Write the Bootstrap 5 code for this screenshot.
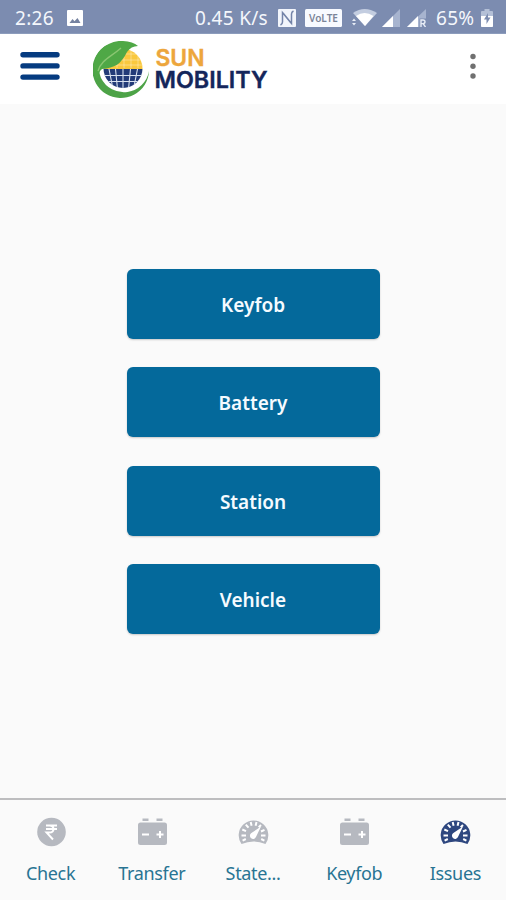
<!DOCTYPE html>
<html lang="en">
<head>
<meta charset="utf-8">
<meta name="viewport" content="width=device-width, initial-scale=1">
<title>Sun Mobility</title>
<link href="https://cdn.jsdelivr.net/npm/bootstrap@5.3.0/dist/css/bootstrap.min.css" rel="stylesheet">
<style>
body{font-family:"Noto Sans",sans-serif;background:#fafafa;height:900px;overflow:hidden}
svg{display:block;flex:none}
.statusbar{height:34px;background:#7c8cb0;color:#f4f7fc;font-size:19px;line-height:34px;border-bottom:1px solid #8c9cbc;padding:2px 13px 0 15px}
.clock{width:52px;letter-spacing:.3px}
.speed{width:83px;letter-spacing:.3px}
.percent{width:45px;margin-left:10px;letter-spacing:.3px}
.nfc{margin-right:9px}
.volte{margin-right:10px}
.wifi{margin-right:5px}
.sig{margin-right:7px}
.topbar{height:70px;background:#fff;padding:0 19px 0 20px}
.icon-btn{background:none;border:0;padding:0}
.brand-logo{margin-left:33px}
.actions{width:253px;gap:28.5px;padding-top:1px}
.action-btn{height:70px;border:0;border-radius:6px;background:#04699b;color:#f5fbff;font-size:19px;font-weight:600;padding-top:8px;box-shadow:0 1px 2px #0003}
.action-btn:hover{background:#04699b;color:#fff}
.tabs{height:102px;border-top:2px solid #bdbdbf;background:#fafafa}
.tab-link{color:#287493;font-size:18px;line-height:26px;text-decoration:none;padding-top:16px;letter-spacing:-.35px}
.tab-link svg{margin-bottom:12px;color:#b6b9c0}
.tab-link.active svg{color:#2e477f}
</style>
</head>
<body class="d-flex flex-column">
<svg width="0" height="0" class="position-absolute" aria-hidden="true">
  <symbol id="battery" viewBox="0 0 32 32">
    <path fill="currentColor" d="M6.500 2.500h6V5h-6zM20.500 2.500h6V5h-6zM4.500 6.500h24q2.500 0 2.500 2.500v17.500q0 2.500-2.500 2.500h-24Q2 29 2 26.500V9q0-2.500 2.500-2.500z"/>
    <path stroke="#fff" stroke-width="2" d="M6 18.500h7M20.500 18.500h7M24 15v7"/>
  </symbol>
  <symbol id="gauge" viewBox="0 0 32 32">
    <path fill="currentColor" d="M4.500 28A14.800 14.800 0 1 1 28.500 28Q16.500 23 4.500 28z"/>
    <path stroke="#fff" stroke-width="2" d="M4.500 19.500h4.500M24 19.500h4.500M5.300 13.500l3.700 1.600M8.800 8.700l2.700 3M13.700 6l.9 3.800M19.500 6l-.9 3.800M24 9l-2.300 2.300M24 15.500l3.500-1.700M5.600 24.600l3.200-1.600M27.400 24.600l-3.200-1.600"/>
    <path fill="#fff" d="M24 10.500L19.200 20.600A3.200 3.200 0 1 1 14.400 17z"/>
  </symbol>
</svg>

<div class="statusbar d-flex align-items-center flex-shrink-0">
  <span class="clock">2:26</span>
  <svg width="16" height="16" viewBox="0 0 16 16"><rect width="16" height="16" rx="1" fill="#fff"/><path d="M2.500 13l3-4 2 2.300L10.500 8l3 5z" fill="#7582a0"/></svg>
  <span class="speed ms-auto">0.45 K/s</span>
  <svg class="nfc" width="18" height="18" viewBox="0 0 18 18"><rect width="18" height="18" rx="1" fill="#f2f5fb"/><path d="M2.500 16q2-1 2-3V3.500L13 14M15.500 2q-2 1-2 3v9.500L5 4" fill="none" stroke="#7484a8" stroke-width="1.500"/></svg>
  <svg class="volte" width="37" height="18" viewBox="0 0 37 18"><rect width="37" height="18" rx="1.500" fill="#f8faff"/><text x="4" y="13" textLength="29" lengthAdjust="spacingAndGlyphs" font-family="Noto Sans" font-size="10.500" font-weight="600" fill="#7b8498">VoLTE</text></svg>
  <svg class="wifi" width="25" height="19" viewBox="0 0 25 19"><path d="M1 5Q12.500-3 25 5L13 18z" fill="#c3cde0"/><path d="M4 8Q12.500 2 21.500 8L13 18z" fill="#fff"/><path d="M0 13l2-2.500L4 13zM0 15h4l-2 2.500z" fill="#e8edf6"/></svg>
  <svg class="sig" width="18" height="18" viewBox="0 0 18 18"><path d="M0 18L18 0v18z" fill="#a7b4cf"/><path d="M0 18L11 7v11z" fill="#fff"/></svg>
  <svg width="19" height="18" viewBox="0 0 19 18"><path d="M0 18L19 0v18z" fill="#a7b4cf"/><path d="M0 18L11 7v11z" fill="#fff"/><path d="M12.500 9.500H19V18h-6.500z" fill="#7c8cb0"/><path d="M14 18v-7h2q2 0 2 1.800t-2 1.800h-2M16 14.500l2.500 3.500" fill="none" stroke="#e8edf6" stroke-width="1.400"/></svg>
  <span class="percent">65%</span>
  <svg width="12" height="18" viewBox="0 0 12 18"><path d="M3.500 0h5v2H11q1 0 1 1v14q0 1-1 1H1q-1 0-1-1V3q0-1 1-1h2.500z" fill="#b4c0d7"/><path d="M0 7h12v10q0 1-1 1H1q-1 0-1-1z" fill="#fff"/><path d="M7 4L3 10.500h2.500V15L9.500 8.500H7z" fill="#7c8cb0"/></svg>
</div>

<header class="topbar d-flex align-items-center flex-shrink-0">
  <button class="icon-btn" aria-label="Menu"><svg width="40" height="70" viewBox="0 0 40 70"><path d="M3 20.700h34M3 31.900h34M3 43.100h34" stroke="#053b80" stroke-width="5.400" stroke-linecap="round"/></svg></button>
  <svg class="brand-logo" width="180" height="70" viewBox="0 0 180 70" role="img" aria-label="Sun Mobility">
    <defs><clipPath id="disc"><circle cx="30" cy="34.500" r="19.500"/></clipPath></defs>
    <g clip-path="url(#disc)">
      <path d="M10 10h44v25H10z" fill="#f9c83e"/>
      <path d="M10 20h44M10 26h44M10 31h44M24 12v22M31 12v22M38 12v22M45 12v22" stroke="#fff" stroke-opacity=".35"/>
      <path d="M10 35h44v20H10z" fill="#233b78"/>
      <path d="M10 41.500h44M10 47.500h44M16 35l4 20M22.500 35l2 20M30 35v20M37.500 35l-2 20M44.500 35l-4 20" stroke="#d8e1ef" stroke-width="1.100"/>
    </g>
    <path d="M14 11A28.300 28.300 0 1 0 56 37A25.500 25.500 0 0 1 8 44Q4 34 9 25z" fill="#4da347"/>
    <path d="M3 44C-5 22 12 6 30 7Q40 7.500 45 12Q38 12 34 18C28 30 22 34 9 35Q5 38 5 44z" fill="#4fa846"/>
    <path d="M5 37C8 26 18 23 28 14" stroke="#8ac672" stroke-width="1.400" fill="none"/>
    <g font-family="Inter,'Liberation Sans',sans-serif" font-weight="600">
      <text x="62.500" y="32" font-size="22.500" textLength="49" lengthAdjust="spacingAndGlyphs" fill="#eda63c" stroke="#eda63c" stroke-width=".4">SUN</text>
      <text x="61.500" y="54" font-size="22.500" textLength="113" lengthAdjust="spacingAndGlyphs" fill="#14265b" stroke="#14265b" stroke-width=".4">MOBILITY</text>
    </g>
  </svg>
  <button class="icon-btn ms-auto" aria-label="More options"><svg width="28" height="70" viewBox="0 0 28 70" fill="#707070"><circle cx="14" cy="22.500" r="2.700"/><circle cx="14" cy="32.300" r="2.700"/><circle cx="14" cy="42" r="2.700"/></svg></button>
</header>

<main class="flex-grow-1 d-flex justify-content-center align-items-center">
  <div class="actions d-grid">
    <button class="btn action-btn">Keyfob</button>
    <button class="btn action-btn">Battery</button>
    <button class="btn action-btn">Station</button>
    <button class="btn action-btn">Vehicle</button>
  </div>
</main>

<nav class="tabs row g-0 flex-shrink-0 text-center">
  <a href="#" class="tab-link col d-flex flex-column align-items-center"><svg width="32" height="32" viewBox="0 0 32 32"><circle cx="16.500" cy="16" r="14.300" fill="currentColor"/><path d="M11 9.500h11M11 13h11M11.500 9.500h3q4 0 4 3.500t-4 3.500h-3l6.500 7" fill="none" stroke="#fff" stroke-width="1.900"/></svg>Check</a>
  <a href="#" class="tab-link col d-flex flex-column align-items-center"><svg width="32" height="32"><use href="#battery"/></svg>Transfer</a>
  <a href="#" class="tab-link col d-flex flex-column align-items-center"><svg width="32" height="32"><use href="#gauge"/></svg>State...</a>
  <a href="#" class="tab-link col d-flex flex-column align-items-center"><svg width="32" height="32"><use href="#battery"/></svg>Keyfob</a>
  <a href="#" class="tab-link active col d-flex flex-column align-items-center"><svg width="32" height="32"><use href="#gauge"/></svg>Issues</a>
</nav>
<script src="https://cdn.jsdelivr.net/npm/bootstrap@5.3.0/dist/js/bootstrap.bundle.min.js"></script>
</body>
</html>
